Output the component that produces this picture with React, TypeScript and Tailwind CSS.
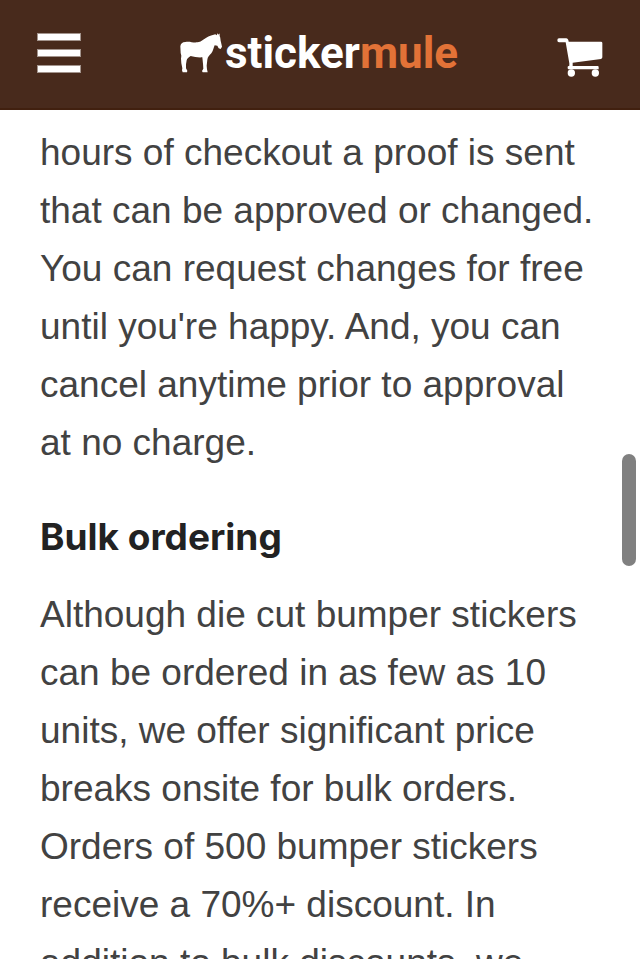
function Mule() {
  return (
    <svg viewBox="0 0 126 120" className="h-10 w-[42px]" fill="#fff" aria-hidden="true">
      <path d="M1 40C2 32 7 27 16 27C29 24 39 30 52 28C66 26 75 14 91 8L106 4L110 7L113 1L116 5L119 1L119 9C122 15 121 22 123 28L126 41L122 48L116 46L112 38L104 37C101 44 100 53 94 61C88 68 83 71 82 80L80 98L81 109L83 118L68 118L66 114L70 107L69 92L67 73C55 74 43 72 32 69C26 73 21 76 20 82L18 94L18 106L22 113L21 118L8 118L6 112L7 106L4 91L3 77L4 68L2 60Z" />
    </svg>
  );
}

function Cart() {
  return (
    <svg viewBox="0 0 136 117" className="h-[39px] w-[46px]" fill="#fff" aria-hidden="true">
      <path d="M5 1H27Q31 1 33 6L34 11H131Q135 11 135 15V58Q135 62 131 63L46 74V84H121Q124 84 124 88V94H33Q31 92 31 89V86Q31 84 36 83V76L25 13H5Q0 13 0 7Q0 1 5 1Z" />
      <circle cx="42" cy="105" r="11" />
      <circle cx="114" cy="105" r="11" />
    </svg>
  );
}

export default function App() {
  return (
    <div className="relative h-screen overflow-hidden bg-white font-['Liberation_Sans',Arial,sans-serif] text-[#424242]">
      <header className="flex h-[110px] items-center justify-between border-b-2 border-[#41200f] bg-[#482a1c] px-[37px] pb-0.5">
        <button type="button" aria-label="Menu" className="flex flex-col gap-2">
          <span className="h-2 w-11 border border-[#a3948d] bg-white" />
          <span className="h-2 w-11 border border-[#a3948d] bg-white" />
          <span className="h-2 w-11 border border-[#a3948d] bg-white" />
        </button>
        <a href="#home" aria-label="Sticker Mule" className="flex items-center gap-[3px]">
          <Mule />
          <span className="font-['Roboto',sans-serif] text-[44px] leading-[52px] font-bold text-white">
            sticker<span className="text-[#e27237]">mule</span>
          </span>
        </a>
        <button type="button" aria-label="Cart" className="pt-2">
          <Cart />
        </button>
      </header>
      <main className="px-10 pt-3.5 text-[37px] leading-[58px]">
        <p>
          hours of checkout a proof is sent that can be approved or changed. You can request changes for free until
          you're happy. And, you can cancel anytime prior to approval at no charge.
        </p>
        <h2 className="mt-9 mb-5 font-['Inter',sans-serif] text-[37px] leading-[58px] font-bold text-[#222]">
          Bulk ordering
        </h2>
        <p>
          Although die cut bumper stickers can be ordered in as few as 10 units, we offer significant price breaks
          onsite for bulk orders. Orders of 500 bumper stickers receive a 70%+ discount. In addition to bulk
          discounts, we
        </p>
      </main>
      <div className="absolute top-[454px] right-1 h-28 w-3.5 rounded-full bg-[#808080]" />
    </div>
  );
}
